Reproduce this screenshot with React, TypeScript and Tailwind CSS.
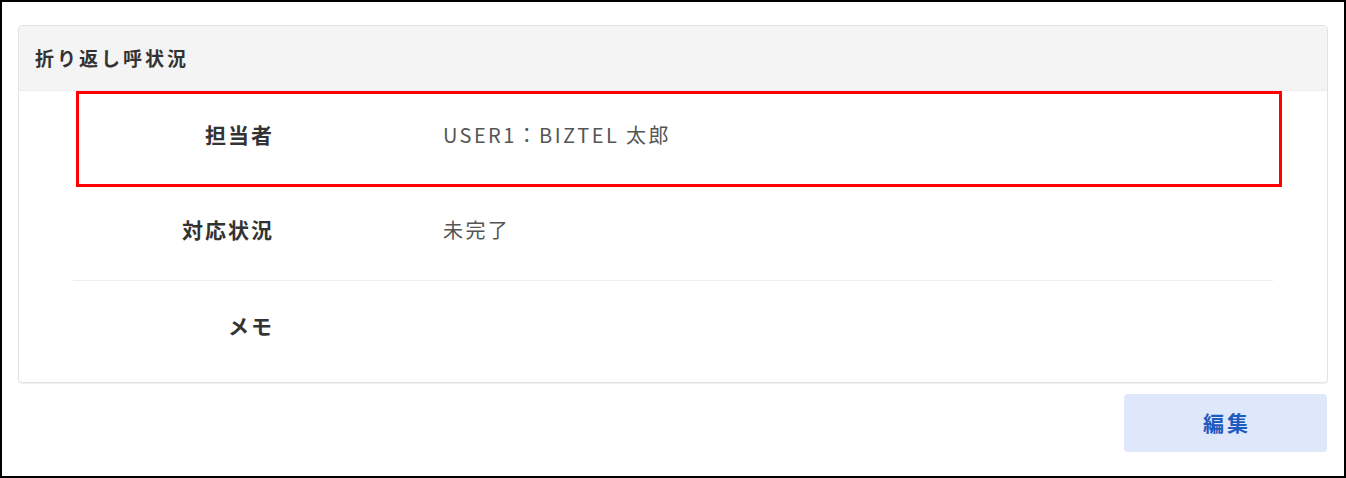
import React from 'react';

const rows = [
  { label: '担当者', value: 'USER1：BIZTEL 太郎' },
  { label: '対応状況', value: '未完了' },
  { label: 'メモ', value: '' },
];

export default function App() {
  return (
    <div
      className="w-[1346px] h-[478px] border-2 border-black bg-white relative overflow-hidden"
      style={{ fontFamily: '"Noto Sans CJK JP", "Noto Sans", sans-serif' }}
    >
      <div className="ml-[16px] mt-[23px] w-[1310px] border border-[#e2e2e2] rounded-[4px] shadow-[0_1px_1px_rgba(0,0,0,0.06)] overflow-hidden">
        <div className="h-[65px] bg-[#f4f4f4] flex items-center pl-[16px] border-b border-[#ececec]">
          <span className="text-[19px] font-bold text-[#333] tracking-[3px]">折り返し呼状況</span>
        </div>
        <div className="px-[54px] pb-[6px]">
          {rows.map((r, i) => (
            <div
              key={r.label}
              className={`h-[95px] pb-[6px] flex items-center ${i < rows.length - 1 ? 'border-b border-[#ececec]' : ''}`}
            >
              <div className="w-[201px] text-right text-[21px] font-bold text-[#333] tracking-[2px]">{r.label}</div>
              <div className="ml-[169px] text-[20px] text-[#555] tracking-[2.4px]">{r.value}</div>
            </div>
          ))}
        </div>
      </div>

      {/* highlight */}
      <div className="absolute left-[74px] top-[89px] w-[1206px] h-[96px] border-[3px] border-[#ff0000]" />

      <div className="flex justify-end pr-[17px] mt-[11px]">
        <button className="w-[203px] h-[58px] rounded-[4px] bg-[#dfe7fb] text-[#1d5bbf] text-[21px] font-bold tracking-[3px] pl-[3px]">
          編集
        </button>
      </div>
    </div>
  );
}
